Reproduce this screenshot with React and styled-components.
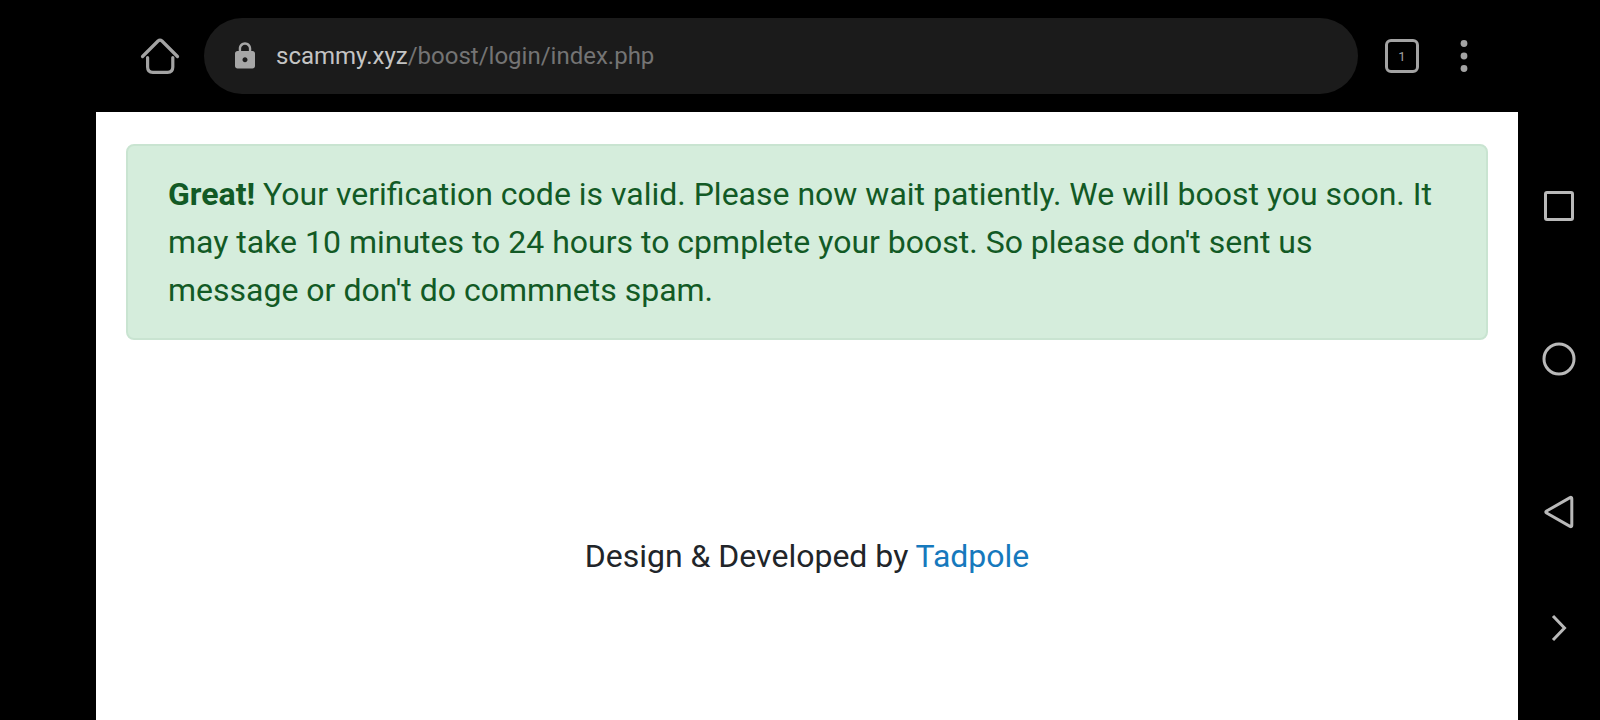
import React from "react";
import styled, { createGlobalStyle } from "styled-components";
import { MdLock } from "react-icons/md";

const App = () => {
  return (
    <>
      <GlobalStyle />
      <Screen>
        <Browser>
          <Toolbar>
            <ToolButton type="button" aria-label="Home">
              <svg width="40" height="40" viewBox="0 0 40 40">
                <path d="M2.5 20.5 L18 5 Q20 3.2 22 5 L37.5 20.5" />
                <path d="M7.6 21.5 V31 Q7.6 36.3 12.8 36.3 H27.6 Q32.8 36.3 32.8 31 V21.5" />
              </svg>
            </ToolButton>
            <AddressBar type="button">
              <MdLock size={30} />
              <Url>
                <Host>scammy.xyz</Host>/boost/login/index.php
              </Url>
            </AddressBar>
            <ToolButton type="button" aria-label="Open tabs">
              <TabCount>1</TabCount>
            </ToolButton>
            <ToolButton type="button" aria-label="More options" $narrow>
              <Dots width="8" height="34" viewBox="0 0 8 34">
                <circle cx="4" cy="4.5" r="3.4" />
                <circle cx="4" cy="17" r="3.4" />
                <circle cx="4" cy="29.5" r="3.4" />
              </Dots>
            </ToolButton>
          </Toolbar>
          <Page>
            <Alert role="alert">
              <strong>Great!</strong> Your verification code is valid. Please
              now wait patiently. We will boost you soon. It may take 10 minutes
              to 24 hours to cpmplete your boost. So please don't sent us
              message or don't do commnets spam.
            </Alert>
            <Footer>
              Design &amp; Developed by <FooterLink href="#">Tadpole</FooterLink>
            </Footer>
          </Page>
        </Browser>
        <SystemNav>
          <NavButton type="button" aria-label="Recent apps">
            <svg width="40" height="40" viewBox="0 0 40 40">
              <rect x="6.5" y="6.5" width="27" height="27" rx="1.5" />
            </svg>
          </NavButton>
          <NavButton type="button" aria-label="Home screen">
            <svg width="40" height="40" viewBox="0 0 40 40">
              <circle cx="20" cy="20" r="15" />
            </svg>
          </NavButton>
          <NavButton type="button" aria-label="Back">
            <svg width="40" height="40" viewBox="0 0 40 40">
              <path d="M7.6 19 L31 5.6 Q32.8 4.8 32.8 6.8 V33.2 Q32.8 35.2 31 34.4 L7.6 21 Q6 20 7.6 19 Z" />
            </svg>
          </NavButton>
          <NavButton type="button" aria-label="Hide navigation" $short>
            <svg width="40" height="40" viewBox="0 0 40 40">
              <path d="M14 8 L25.5 20 L14 32" />
            </svg>
          </NavButton>
        </SystemNav>
      </Screen>
    </>
  );
};

const GlobalStyle = createGlobalStyle`
  * {
    box-sizing: border-box;
  }
  body {
    margin: 0;
    background-color: #000000;
    font-family: Roboto, "Liberation Sans", sans-serif;
  }
  button {
    border: none;
    padding: 0;
    background: none;
    font-family: inherit;
    cursor: pointer;
  }
`;
const Screen = styled.div`
  display: flex;
  min-height: 100vh;
  padding-left: 96px;
`;
const Browser = styled.div`
  display: flex;
  flex-direction: column;
  flex: 1;
  min-width: 0;
`;
const Toolbar = styled.header`
  display: flex;
  align-items: center;
  gap: 20px;
  height: 112px;
  padding: 0 36px 0 40px;
`;
const ToolButton = styled.button`
  display: flex;
  justify-content: center;
  align-items: center;
  flex-shrink: 0;
  width: ${(props) => (props.$narrow ? "36px" : "48px")};
  height: 48px;
  color: #a3a3a3;
  svg {
    fill: none;
    stroke: currentColor;
    stroke-width: 3.2;
    stroke-linecap: round;
  }
`;
const Dots = styled.svg`
  && {
    fill: currentColor;
    stroke: none;
  }
`;
const AddressBar = styled.button`
  display: flex;
  align-items: center;
  gap: 16px;
  flex: 1;
  min-width: 0;
  height: 76px;
  && {
    padding: 0 26px;
  }
  border-radius: 38px;
  background-color: #1b1b1b;
  color: #a6a6a6;
  svg {
    flex-shrink: 0;
  }
`;
const Url = styled.span`
  overflow: hidden;
  white-space: nowrap;
  text-overflow: ellipsis;
  font-size: 24px;
  line-height: 32px;
  color: #747474;
`;
const Host = styled.span`
  color: #c4c4c4;
`;
const TabCount = styled.span`
  display: flex;
  justify-content: center;
  align-items: center;
  width: 34px;
  height: 34px;
  border: 3px solid #a3a3a3;
  border-radius: 6px;
  font-size: 13px;
`;
const Page = styled.main`
  flex: 1;
  padding: 32px 30px;
  background-color: #ffffff;
  color: #212529;
  font-size: 32px;
  line-height: 48px;
`;
const Alert = styled.div`
  padding: 24px 40px;
  border: 2px solid #c9e4d1;
  border-radius: 8px;
  background-color: #d5eddc;
  color: #125a25;
`;
const Footer = styled.footer`
  margin-top: 192px;
  text-align: center;
`;
const FooterLink = styled.a`
  color: #1679bd;
  text-decoration: none;
`;
const SystemNav = styled.nav`
  display: flex;
  flex-direction: column;
  width: 82px;
  padding-top: 129px;
`;
const NavButton = styled.button`
  display: flex;
  justify-content: center;
  align-items: center;
  height: ${(props) => (props.$short ? "80px" : "153px")};
  color: #b9b9b9;
  svg {
    fill: none;
    stroke: currentColor;
    stroke-width: 3;
  }
`;

export default App;
